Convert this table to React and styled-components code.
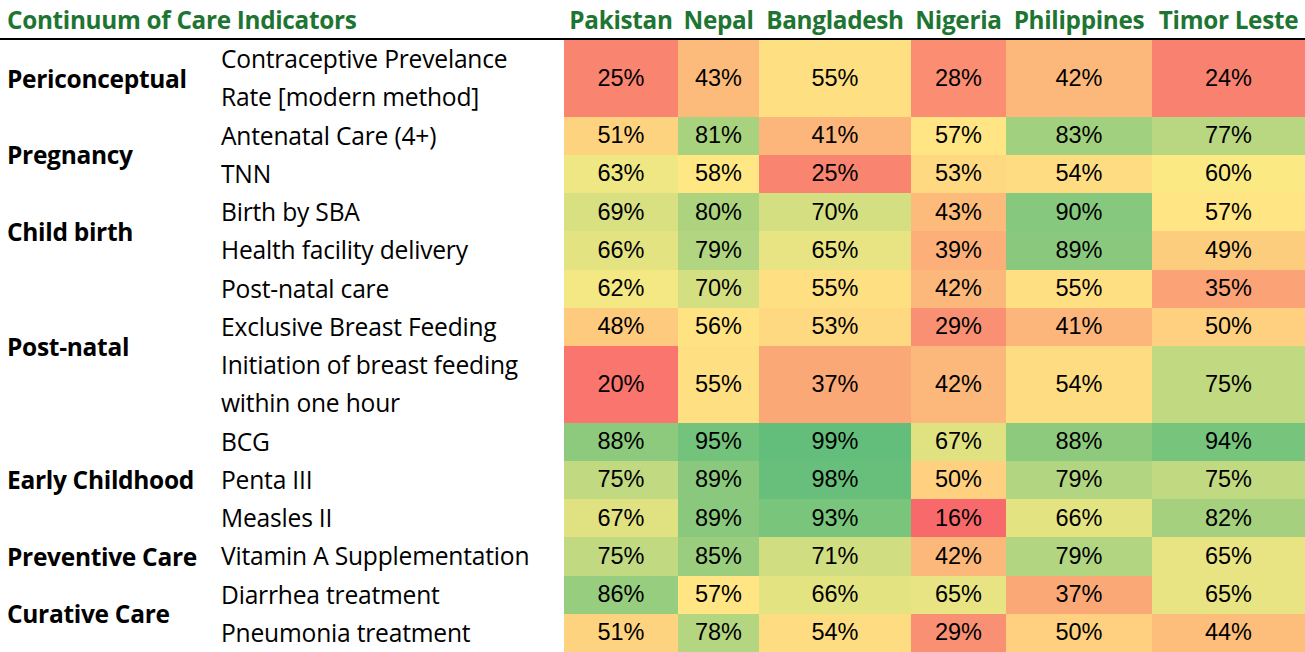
import React from 'react';
import styled, { createGlobalStyle } from 'styled-components';

const GlobalStyle = createGlobalStyle`
  html, body {
    margin: 0;
    padding: 0;
    background: #ffffff;
  }
  body {
    font-family: "Open Sans", "Liberation Sans", sans-serif;
    color: #000;
  }
`;

const countries = [
  { name: 'Pakistan', width: 114 },
  { name: 'Nepal', width: 81 },
  { name: 'Bangladesh', width: 152 },
  { name: 'Nigeria', width: 95 },
  { name: 'Philippines', width: 146 },
  { name: 'Timor Leste', width: 153 },
];

const groups = [
  {
    category: 'Periconceptual',
    rows: [
      { label: ['Contraceptive Prevelance', 'Rate [modern method]'], values: [25, 43, 55, 28, 42, 24] },
    ],
  },
  {
    category: 'Pregnancy',
    rows: [
      { label: ['Antenatal Care (4+)'], values: [51, 81, 41, 57, 83, 77] },
      { label: ['TNN'], values: [63, 58, 25, 53, 54, 60] },
    ],
  },
  {
    category: 'Child birth',
    rows: [
      { label: ['Birth by SBA'], values: [69, 80, 70, 43, 90, 57] },
      { label: ['Health facility delivery'], values: [66, 79, 65, 39, 89, 49] },
    ],
  },
  {
    category: 'Post-natal',
    rows: [
      { label: ['Post-natal care'], values: [62, 70, 55, 42, 55, 35] },
      { label: ['Exclusive Breast Feeding'], values: [48, 56, 53, 29, 41, 50] },
      { label: ['Initiation of breast feeding', 'within one hour'], values: [20, 55, 37, 42, 54, 75] },
    ],
  },
  {
    category: 'Early Childhood',
    rows: [
      { label: ['BCG'], values: [88, 95, 99, 67, 88, 94] },
      { label: ['Penta III'], values: [75, 89, 98, 50, 79, 75] },
      { label: ['Measles II'], values: [67, 89, 93, 16, 66, 82] },
    ],
  },
  {
    category: 'Preventive Care',
    rows: [
      { label: ['Vitamin A Supplementation'], values: [75, 85, 71, 42, 79, 65] },
    ],
  },
  {
    category: 'Curative Care',
    rows: [
      { label: ['Diarrhea treatment'], values: [86, 57, 66, 65, 37, 65] },
      { label: ['Pneumonia treatment'], values: [51, 78, 54, 29, 50, 44] },
    ],
  },
];

// excel style 3 colour scale: min -> red, median -> yellow, max -> green
const RED = [248, 105, 107];
const YELLOW = [255, 235, 132];
const GREEN = [99, 190, 123];

const allValues = groups.flatMap((g) => g.rows.flatMap((r) => r.values)).sort((a, b) => a - b);
const minV = allValues[0];
const maxV = allValues[allValues.length - 1];
const midPos = 0.5 * (allValues.length - 1);
const midV =
  allValues[Math.floor(midPos)] +
  (allValues[Math.ceil(midPos)] - allValues[Math.floor(midPos)]) * (midPos - Math.floor(midPos));

const mix = (a, b, t) => a.map((c, i) => Math.round(c + (b[i] - c) * t));

const heatColor = (v) => {
  const rgb = v <= midV
    ? mix(RED, YELLOW, (v - minV) / (midV - minV))
    : mix(YELLOW, GREEN, (v - midV) / (maxV - midV));
  return `rgb(${rgb.join(',')})`;
};

const UNIT = 38.25;

const rowHeights = groups
  .flatMap((g) => g.rows.map((r) => `${UNIT * r.label.length}px`))
  .join(' ');

const Table = styled.div`
  display: grid;
  grid-template-columns: 214px 350px ${countries.map((c) => `${c.width}px`).join(' ')};
  grid-template-rows: 40px ${(p) => p.$rows};
  width: 1305px;
`;

const HeaderCell = styled.div`
  grid-column: ${(p) => (p.$wide ? '1 / span 2' : 'auto')};
  display: flex;
  align-items: center;
  justify-content: ${(p) => (p.$wide ? 'flex-start' : 'center')};
  padding-left: ${(p) => (p.$wide ? '7px' : '0')};
  padding-top: 1px;
  border-bottom: 2px solid #000;
  color: #1e7532;
  font-weight: 700;
  font-size: 24.3px;
  white-space: nowrap;
  letter-spacing: -0.3px;
`;

const CategoryCell = styled.div`
  grid-column: 1;
  grid-row: span ${(p) => p.$span};
  display: flex;
  align-items: center;
  padding-left: 7px;
  font-weight: 700;
  font-size: 24.5px;
  white-space: nowrap;
  letter-spacing: -0.3px;
`;

const LabelCell = styled.div`
  grid-column: 2;
  display: flex;
  flex-direction: column;
  justify-content: center;
  padding-left: 7px;
  font-size: 24.6px;
  line-height: ${UNIT}px;
  white-space: nowrap;
  letter-spacing: -0.2px;
`;

const HeatCell = styled.div`
  display: flex;
  align-items: center;
  justify-content: center;
  background: ${(p) => p.$bg};
  font-family: "Liberation Sans", Arial, sans-serif;
  font-size: 23.5px;
  color: #000;
`;

export default function App() {
  return (
    <>
      <GlobalStyle />
      <Table $rows={rowHeights}>
        <HeaderCell $wide>Continuum of Care Indicators</HeaderCell>
        {countries.map((c) => (
          <HeaderCell key={c.name}>{c.name}</HeaderCell>
        ))}
        {groups.map((g) => (
          <React.Fragment key={g.category}>
            <CategoryCell $span={g.rows.length}>{g.category}</CategoryCell>
            {g.rows.map((r) => (
              <React.Fragment key={r.label[0]}>
                <LabelCell>
                  {r.label.map((line) => (
                    <span key={line}>{line}</span>
                  ))}
                </LabelCell>
                {r.values.map((v, i) => (
                  <HeatCell key={i} $bg={heatColor(v)}>
                    {v}%
                  </HeatCell>
                ))}
              </React.Fragment>
            ))}
          </React.Fragment>
        ))}
      </Table>
    </>
  );
}
